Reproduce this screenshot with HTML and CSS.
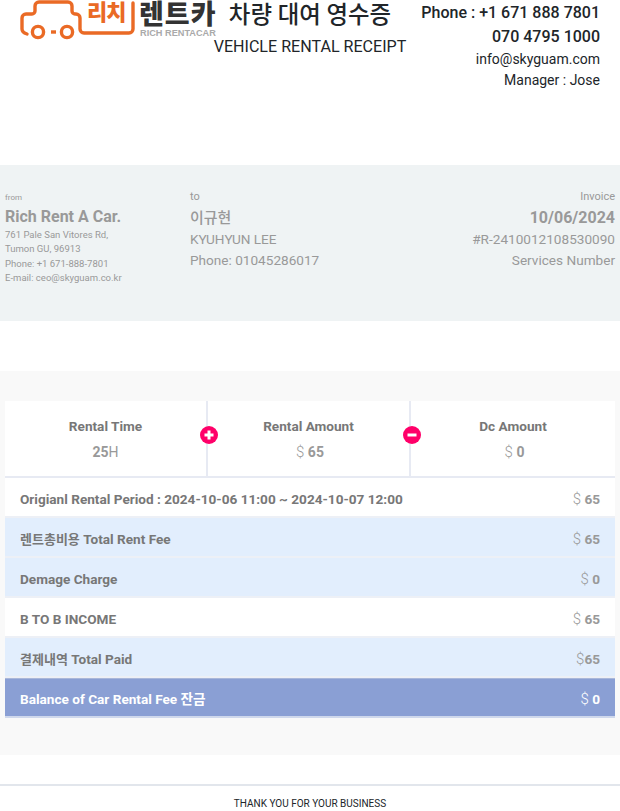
FILE: index.html
```html
<!DOCTYPE html>
<html lang="ko">
<head>
<meta charset="utf-8">
<title>Vehicle Rental Receipt</title>
<link rel="stylesheet" href="styles.css">
</head>
<body>
<header class="top">
  <svg class="logo" width="200" height="40" viewBox="0 0 200 40" fill="none" role="img">
    <path d="M113 3V29a4 4 0 0 1-4 4H64a4 4 0 0 1-4-4V18a4 4 0 0 0-4-4h-1a3 3 0 0 1-3-3V6a4 4 0 0 0-4-4H19a4 4 0 0 0-4 4v5a3 3 0 0 1-3 3H6a4 4 0 0 0-4 4v11c0 2 2 4 5 5" stroke="#ea6a25" stroke-width="3.4" stroke-linecap="round"/>
    <circle cx="18" cy="32" r="5.6" stroke="#ea6a25" stroke-width="3.4"/>
    <circle cx="47" cy="32" r="5.6" stroke="#ea6a25" stroke-width="3.4"/>
    <path d="M31 32h5" stroke="#ea6a25" stroke-width="3.4"/>
    <text class="logo-rich" x="67" y="20">리치</text>
    <text class="logo-rent" x="119" y="24">렌트카</text>
    <text class="logo-en" x="120" y="36">RICH RENTACAR</text>
  </svg>
  <div class="title">
    <div class="title-ko">차량 대여 영수증</div>
    <div class="title-en">VEHICLE RENTAL RECEIPT</div>
  </div>
  <div class="contact">
    <div class="contact-strong">Phone : +1 671 888 7801</div>
    <div class="contact-strong">070 4795 1000</div>
    <div class="contact-line">info@skyguam.com</div>
    <div class="contact-line">Manager : Jose</div>
  </div>
</header>

<section class="info">
  <div class="from">
    <div class="from-label">from</div>
    <div class="from-name">Rich Rent A Car.</div>
    <div class="from-line">761 Pale San Vitores Rd,</div>
    <div class="from-line">Tumon GU, 96913</div>
    <div class="from-line">Phone: +1 671-888-7801</div>
    <div class="from-line">E-mail: ceo@skyguam.co.kr</div>
  </div>
  <div class="to">
    <div class="to-label">to</div>
    <div class="to-name">이규현</div>
    <div class="to-line">KYUHYUN LEE</div>
    <div class="to-line">Phone: 01045286017</div>
  </div>
  <div class="invoice">
    <div class="to-label">Invoice</div>
    <div class="invoice-date">10/06/2024</div>
    <div class="to-line">#R-2410012108530090</div>
    <div class="to-line">Services Number</div>
  </div>
</section>

<section class="summary">
  <div class="panel">
    <div class="stats">
      <div class="stat">
        <div class="stat-title">Rental Time</div>
        <div class="stat-value"><b>25</b>H</div>
      </div>
      <div class="stat stat-sep">
        <span class="badge" aria-hidden="true"><svg width="18" height="18" viewBox="0 0 18 18"><circle cx="9" cy="9" r="9" fill="#ff0069"/><path d="M9 4.5v9M4.5 9h9" stroke="#fff" stroke-width="3"/></svg></span>
        <div class="stat-title">Rental Amount</div>
        <div class="stat-value"><span class="cur">$</span> <b>65</b></div>
      </div>
      <div class="stat stat-sep">
        <span class="badge" aria-hidden="true"><svg width="18" height="18" viewBox="0 0 18 18"><circle cx="9" cy="9" r="9" fill="#ff0069"/><path d="M4.5 9h9" stroke="#fff" stroke-width="3"/></svg></span>
        <div class="stat-title">Dc Amount</div>
        <div class="stat-value"><span class="cur">$</span> <b>0</b></div>
      </div>
    </div>
    <div class="row"><span>Origianl Rental Period : 2024-10-06 11:00 ~ 2024-10-07 12:00</span><span class="amt"><span class="cur">$</span> <b>65</b></span></div>
    <div class="row row-blue"><span><span class="ko">렌트총비용</span> Total Rent Fee</span><span class="amt"><span class="cur">$</span> <b>65</b></span></div>
    <div class="row row-blue"><span>Demage Charge</span><span class="amt"><span class="cur">$</span> <b>0</b></span></div>
    <div class="row"><span>B TO B INCOME</span><span class="amt"><span class="cur">$</span> <b>65</b></span></div>
    <div class="row row-blue"><span><span class="ko">결제내역</span> Total Paid</span><span class="amt"><span class="cur">$</span><b>65</b></span></div>
    <div class="row row-total"><span>Balance of Car Rental Fee 잔금</span><span class="amt"><span class="cur">$</span> <b>0</b></span></div>
  </div>
</section>

<footer class="foot">THANK YOU FOR YOUR BUSINESS</footer>
</body>
</html>
```

FILE: styles.css
```css
* { box-sizing: border-box; }
html, body { margin: 0; padding: 0; }
body {
  width: 620px;
  height: 811px;
  overflow: hidden;
  background: #fff;
  font-family: Roboto, "Noto Sans CJK KR", sans-serif;
  color: #212529;
}

/* header */
.top {
  position: relative;
  height: 165px;
}
.logo {
  position: absolute;
  left: 20px;
  top: 0;
}
.logo-rich {
  font: 900 22px "Noto Sans CJK KR", sans-serif;
  fill: #ea6a25;
  letter-spacing: -1px;
}
.logo-rent {
  font: 900 27px "Noto Sans CJK KR", sans-serif;
  fill: #333;
  letter-spacing: 1px;
}
.logo-en {
  font: 700 9.2px "Liberation Sans", sans-serif;
  fill: #aaa;
}
.title {
  position: absolute;
  left: 160px;
  width: 300px;
  top: 1px;
  text-align: center;
}
.title-ko { font: 500 23.4px/28px Roboto, "Noto Sans CJK KR", sans-serif; }
.title-en { font-size: 16.08px; line-height: 20px; margin-top: 8px; }
.contact {
  position: absolute;
  right: 20px;
  top: 1px;
  text-align: right;
}
.contact-strong { font-size: 16px; font-weight: 500; line-height: 24px; }
.contact-line { font-size: 14px; line-height: 21px; }

/* info band */
.info {
  height: 156px;
  background: #eff3f4;
  display: flex;
  color: #999;
  padding: 25px 5px 0;
}
.from { width: 185px; }
.to { width: 200px; }
.invoice { flex: 1; text-align: right; }
.from-label { font-size: 8px; line-height: 14px; margin-top: 1px; }
.from-name { font-size: 16px; font-weight: 700; line-height: 23px; }
.from-line { font-size: 9.52px; line-height: 14.4px; }
.to-label { font-size: 11px; line-height: 14px; }
.to-name { font-size: 15px; line-height: 22px; font-weight: 500; margin-top: 3px; }
.to-line { font-size: 13.6px; line-height: 21px; }
.invoice-date { font-size: 16px; font-weight: 700; line-height: 22px; margin-top: 3px; }

/* summary */
.summary {
  margin-top: 50px;
  height: 384px;
  background: #f9f9f9;
  padding: 30px 5px 0;
}
.panel { background: #fff; }
.stats {
  display: grid;
  grid-template-columns: 201px 203px 206px;
  height: 77px;
  border-bottom: 2px solid #e7eaf3;
}
.stat { position: relative; text-align: center; padding-top: 17px; }
.stat-sep { border-left: 2px solid #e7eaf3; }
.stat-title { font-size: 13.6px; font-weight: 700; line-height: 17px; color: #777; }
.stat-value { font-size: 14px; line-height: 17px; margin-top: 9px; color: #999; }
.stat-sep .stat-value { padding-left: 3px; }
.stat-value b { font-weight: 700; }
.cur { font-weight: 300; font-size: 15px; }
.badge {
  position: absolute;
  left: -8.5px;
  top: 25px;
  width: 18px;
  height: 18px;
  display: block;
}
.badge svg { display: block; }

.row {
  display: flex;
  justify-content: space-between;
  align-items: center;
  height: 40px;
  padding: 4px 15px 0;
  font-size: 13.6px;
  line-height: 17px;
  font-weight: 700;
  color: #777;
  border-bottom: 2px solid #edf0f6;
}
.ko { font-size: 13px; }
.row-blue { background: #e2eefd; }
.amt { color: #999; font-size: 13.6px; }
.amt b { font-weight: 700; }
.row-total {
  background: #8a9fd4;
  color: #fff;
  border-bottom: 2px solid #cfd8ec;
  border-top: 1px solid #a9b7da;
}
.row-total .amt { color: #fff; }

/* footer */
.foot {
  margin-top: 29px;
  border-top: 2px solid #e2e6ec;
  text-align: center;
  font-size: 10px;
  line-height: 14px;
  padding-top: 11px;
}
```
